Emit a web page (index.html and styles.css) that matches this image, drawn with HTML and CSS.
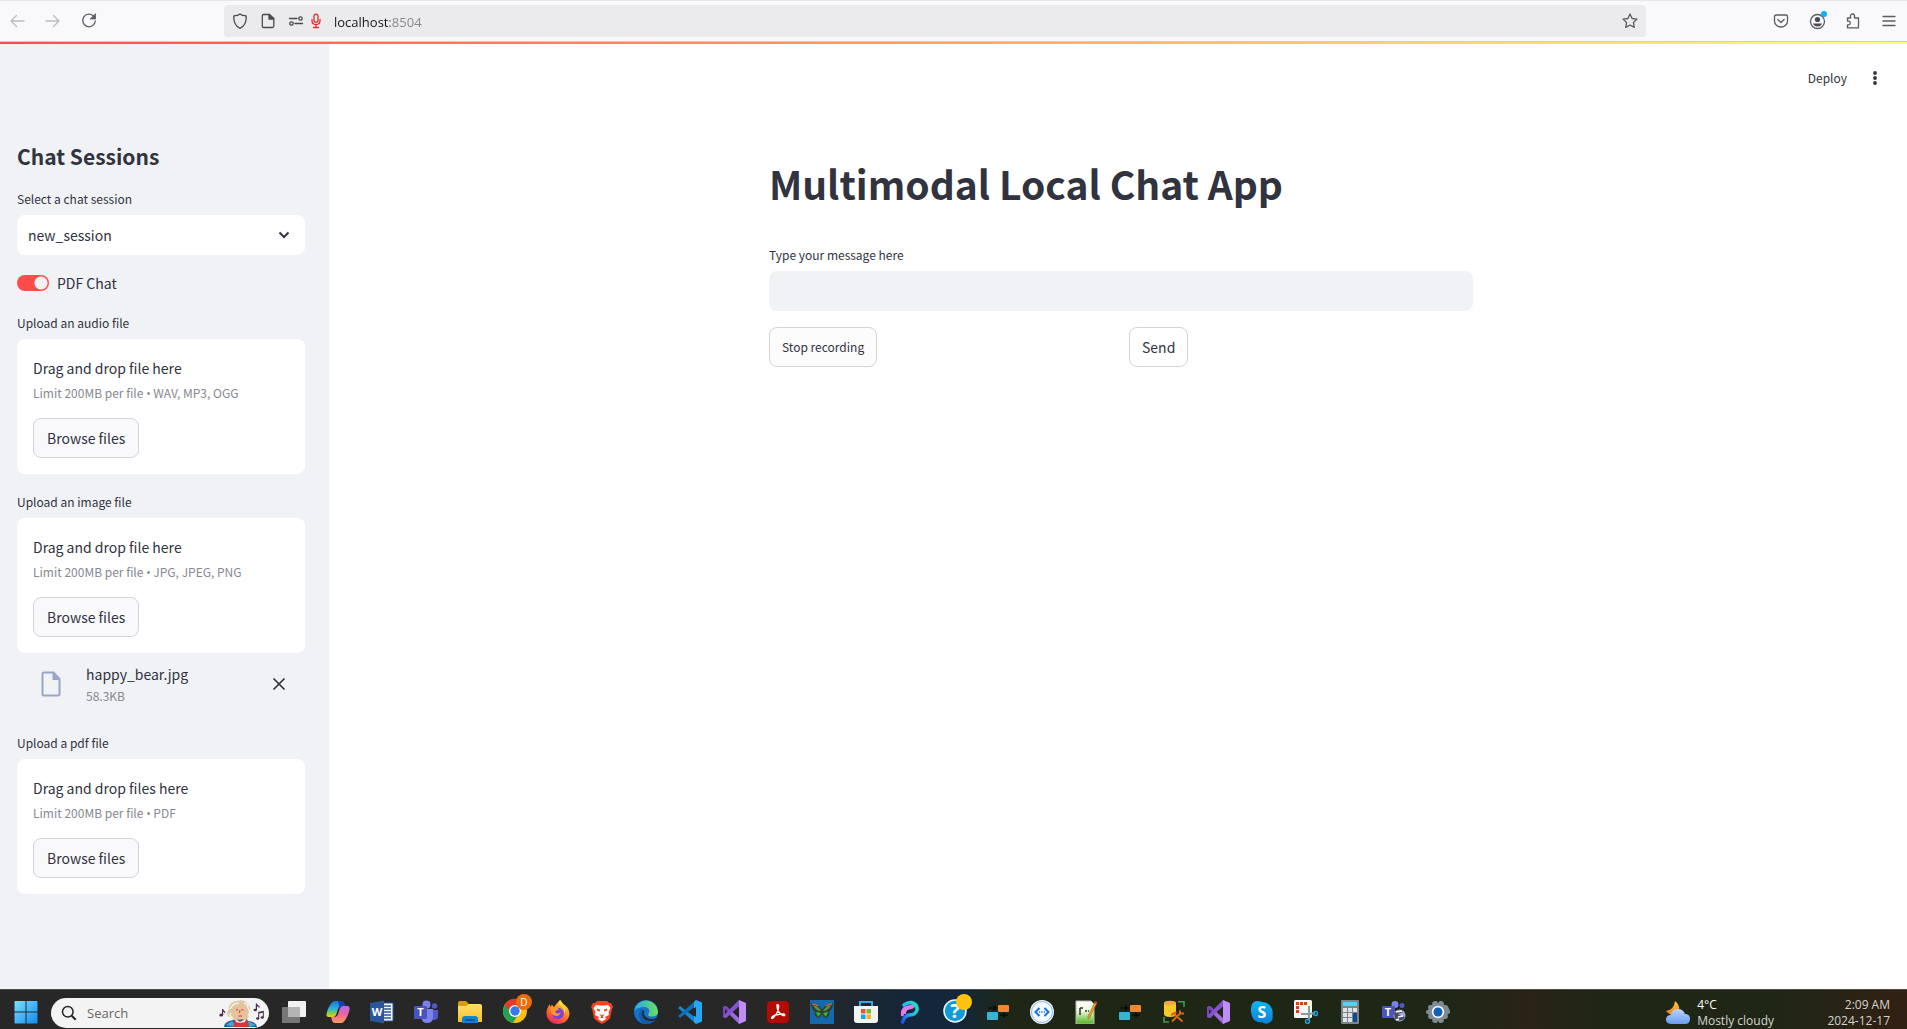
FILE: index.html
```html
<!DOCTYPE html>
<html lang="en">
<head>
<meta charset="utf-8">
<meta name="viewport" content="width=device-width, initial-scale=1">
<title>Multimodal Local Chat App</title>
<link rel="stylesheet" href="styles.css">
</head>
<body>
<svg class="defs" aria-hidden="true">
  <defs>
    <linearGradient id="g-win" x1="0" y1="0" x2="1" y2="1"><stop offset="0" stop-color="#7be0ff"/><stop offset="1" stop-color="#0f8bf0"/></linearGradient>
    <linearGradient id="g-cop1" x1="0" y1="0" x2="0" y2="1"><stop offset="0" stop-color="#1474e0"/><stop offset=".5" stop-color="#2bb5d8"/><stop offset=".75" stop-color="#7ccf4a"/><stop offset="1" stop-color="#f6c915"/></linearGradient>
    <linearGradient id="g-cop2" x1="0" y1="0" x2="0" y2="1"><stop offset="0" stop-color="#b26bf0"/><stop offset=".5" stop-color="#f0649a"/><stop offset="1" stop-color="#ff9a5c"/></linearGradient>
    <linearGradient id="g-folder" x1="0" y1="0" x2="0" y2="1"><stop offset="0" stop-color="#ffdf6b"/><stop offset="1" stop-color="#fbc02a"/></linearGradient>
    <linearGradient id="g-ff" x1=".8" y1="0" x2=".3" y2="1"><stop offset="0" stop-color="#ffe94a"/><stop offset=".45" stop-color="#ff8a1f"/><stop offset="1" stop-color="#f0225f"/></linearGradient>
    <linearGradient id="g-edge" x1="0" y1="0" x2="1" y2="0"><stop offset="0" stop-color="#2aa9e8"/><stop offset="1" stop-color="#6be05a"/></linearGradient>
    <linearGradient id="g-p" x1="0" y1="1" x2="1" y2="0"><stop offset="0" stop-color="#2350e8"/><stop offset=".5" stop-color="#22b8f0"/><stop offset="1" stop-color="#19e6b0"/></linearGradient>
    <linearGradient id="g-p2" x1="0" y1="0" x2="1" y2="1"><stop offset="0" stop-color="#ff9ae0"/><stop offset="1" stop-color="#c05cf0"/></linearGradient>
    <linearGradient id="g-note" x1="0" y1="0" x2="0" y2="1"><stop offset="0" stop-color="#fff"/><stop offset=".45" stop-color="#eaf6d8"/><stop offset="1" stop-color="#4bb51a"/></linearGradient>
    <linearGradient id="g-skype" x1="0" y1="0" x2="0" y2="1"><stop offset="0" stop-color="#12b4ee"/><stop offset="1" stop-color="#0a82dc"/></linearGradient>
    <linearGradient id="g-cloud" x1="0" y1="0" x2="0" y2="1"><stop offset="0" stop-color="#b9d6ff"/><stop offset="1" stop-color="#6a9cf2"/></linearGradient>
    <linearGradient id="g-moon" x1="0" y1="0" x2="0" y2="1"><stop offset="0" stop-color="#ffc83a"/><stop offset="1" stop-color="#f07f22"/></linearGradient>
    <symbol id="i-vs" viewBox="0 0 24 24"><path d="M1 7l3-1 13 12v6L2 9z" fill="#9b6bd8"/><path d="M1 7l3-1 3 2.500v7L4 18l-3-1z" fill="#7a45bd"/><path d="M3 9v6l3-3z" fill="#23231f"/><path d="M17 0L4 13l-3 4 3 1L17 6.500z" fill="#8452cf"/><path d="M17 0l7 3v18l-7 3z" fill="#c08cf5"/><path d="M17 7v10l-6-5z" fill="#23231f"/></symbol>
    <symbol id="i-flow" viewBox="0 0 24 24"><path d="M2 8h9M14 15h8" stroke="#0c0c0c" stroke-width="1.600"/><path d="M7 5l4 3-4 3zM17 12l4 3-4 3z" fill="#0c0c0c"/><rect x="12" y="5" width="11" height="7" rx="1" fill="#f5862b"/><rect x="1" y="12" width="11" height="8" rx="1" fill="#39b3cf"/></symbol>
  </defs>
</svg>

<header class="browser">
  <nav class="browser-nav" aria-label="Browser">
    <button class="tool" aria-label="Back" disabled><svg width="16" height="16" viewBox="0 0 16 16" class="line faded"><path d="M15 8H2M7.500 2.500L2 8l5.500 5.500"/></svg></button>
    <button class="tool" aria-label="Forward" disabled><svg width="16" height="16" viewBox="0 0 16 16" class="line faded"><path d="M1 8h13M8.500 2.500L14 8l-5.500 5.500"/></svg></button>
    <button class="tool" aria-label="Reload"><svg width="16" height="16" viewBox="0 0 16 16" class="line"><path d="M13 3.600A6.300 6.300 0 1 0 14.300 8"/><path d="M14.500 1v5h-5z" fill="#5b5b66" stroke-width=".8"/></svg></button>
  </nav>
  <div class="address">
    <svg width="16" height="16" viewBox="0 0 16 16" class="line dark"><path d="M8 .9C6.500 2.200 4 2.700 1.800 2.900 1.500 8 3 13 8 15.300 13 13 14.500 8 14.200 2.900 12 2.700 9.500 2.200 8 .9z"/></svg>
    <svg width="16" height="16" viewBox="0 0 16 16" class="line dark page-icon"><path d="M3.500 1.500H9.500L13.800 5.500V13q0 1.500-1.500 1.500H3.500Q2.300 14.500 2.300 13V3Q2.300 1.500 3.500 1.500z"/><path d="M9 1.500v4.500h4.800z" fill="#4a4a52"/></svg>
    <svg width="16" height="16" viewBox="0 0 16 16" class="line dark perm-icon"><path d="M1.500 5.500h7.500M7 10.500h7.500"/><circle cx="12.500" cy="5.500" r="1.700"/><circle cx="3.500" cy="10.500" r="1.700"/></svg>
    <svg width="12" height="16" viewBox="0 0 12 16" class="line red"><rect x="4" y="1.200" width="4" height="8" rx="2"/><path d="M2 6.500v1q0 4 4 4t4-4v-1M6 11.500v3M3.500 14.500h5"/></svg>
    <input class="url" type="text" aria-label="Address" value="localhost:8504">
    <button class="tool star" aria-label="Bookmark"><svg width="16" height="16" viewBox="0 0 16 16" class="line"><path d="M8 1l2.100 4.500 4.900.600-3.600 3.400.9 4.900L8 12l-4.300 2.400.9-4.900L1 6.100l4.900-.6z"/></svg></button>
  </div>
  <div class="browser-nav end">
    <button class="tool" aria-label="Save to Pocket"><svg width="16" height="16" viewBox="0 0 16 16" class="line"><path d="M3 2h10q1.500 0 1.500 1.500V8a6.500 6 0 0 1-13 0V3.500Q1.500 2 3 2zM4.800 6.500L8 9.500l3.200-3"/></svg></button>
    <button class="tool" aria-label="Account"><svg width="20" height="20" viewBox="0 0 20 20" class="line"><circle cx="10.500" cy="10.500" r="7"/><circle cx="10.500" cy="8.500" r="2.600" fill="#4a4a55" stroke="none"/><path d="M6 12.500h9q-1 3-4.500 3T6 12.500z" fill="#4a4a55" stroke="none"/><circle cx="17" cy="3" r="3" fill="#0ab0ff" stroke="none"/></svg></button>
    <button class="tool" aria-label="Extensions"><svg width="16" height="16" viewBox="0 0 16 16" class="line"><path d="M2.500 5h3V3a2 2 0 0 1 4 0v2h4v9.800h-11v-3h1a1.800 1.800 0 0 0 0-3.600h-1z"/></svg></button>
    <button class="tool" aria-label="Menu"><svg width="14" height="14" viewBox="0 0 14 14" class="line"><path d="M1 2.500h12M1 7h12M1 11.500h12"/></svg></button>
  </div>
</header>
<div class="progress-stripe"></div>

<div class="app">
  <aside class="sidebar">
    <h2>Chat Sessions</h2>
    <label class="label" for="session">Select a chat session</label>
    <div class="select-wrap">
      <select id="session"><option>new_session</option></select>
      <svg class="chevron" width="12" height="8" viewBox="0 0 12 8"><path d="M1.500 1.500L6 6l4.500-4.500" fill="none" stroke="#31333f" stroke-width="2"/></svg>
    </div>
    <label class="toggle"><input type="checkbox" role="switch" checked>PDF Chat</label>

    <section class="uploader">
      <h3 class="label">Upload an audio file</h3>
      <div class="dropzone">
        <p>Drag and drop file here</p>
        <small>Limit 200MB per file <span class="dot">•</span> WAV, MP3, OGG</small>
        <button class="btn">Browse files</button>
      </div>
    </section>

    <section class="uploader">
      <h3 class="label">Upload an image file</h3>
      <div class="dropzone">
        <p>Drag and drop file here</p>
        <small>Limit 200MB per file <span class="dot">•</span> JPG, JPEG, PNG</small>
        <button class="btn">Browse files</button>
      </div>
      <div class="file">
        <svg width="20" height="26" viewBox="0 0 20 26"><path d="M3 1.500h9.500L18.500 8v15q0 1.500-1.500 1.500H3q-1.500 0-1.500-1.500V3Q1.500 1.500 3 1.500z" fill="none" stroke="#98a5ca" stroke-width="2"/><path d="M11.500 1.500V9h7z" fill="#98a5ca"/></svg>
        <div class="file-info"><span>happy_bear.jpg</span><small>58.3KB</small></div>
        <button class="remove" aria-label="Remove file"><svg width="14" height="14" viewBox="0 0 14 14"><path d="M1.500 1.500l11 11M12.500 1.500l-11 11" stroke="#31333f" stroke-width="1.700"/></svg></button>
      </div>
    </section>

    <section class="uploader last">
      <h3 class="label">Upload a pdf file</h3>
      <div class="dropzone">
        <p>Drag and drop files here</p>
        <small>Limit 200MB per file <span class="dot">•</span> PDF</small>
        <button class="btn">Browse files</button>
      </div>
    </section>
  </aside>

  <main class="main">
    <div class="app-header">
      <button class="deploy">Deploy</button>
      <button class="kebab" aria-label="Main menu"><svg width="4" height="14" viewBox="0 0 4 14" fill="#31333f"><circle cx="2" cy="2" r="1.900"/><circle cx="2" cy="7" r="1.900"/><circle cx="2" cy="12" r="1.900"/></svg></button>
    </div>
    <div class="content">
      <h1>Multimodal Local Chat App</h1>
      <label class="label" for="message">Type your message here</label>
      <input class="message" id="message" type="text">
      <div class="actions">
        <div><button class="btn record">Stop recording</button></div>
        <div><button class="btn send">Send</button></div>
      </div>
    </div>
  </main>
</div>

<footer class="taskbar">
  <button class="task start" aria-label="Start"><svg width="24" height="24" viewBox="0 0 24 24" fill="url(#g-win)"><path d="M1 1h10.500v10.500H.5V1.500zM12.500 1H23l.5.500v10h-11zM.5 12.500h11v11H1l-.5-.5zM12.500 12.500h11V23l-.5.500H12.500z"/></svg></button>
  <label class="search">
    <svg width="16" height="16" viewBox="0 0 16 16"><circle cx="6.800" cy="6.800" r="5.300" fill="none" stroke="#222" stroke-width="1.500"/><path d="M10.700 10.700l4 4" stroke="#222" stroke-width="2"/></svg>
    <input type="search" placeholder="Search" aria-label="Search">
    <svg width="46" height="28" viewBox="0 0 46 28">
      <g fill="#4b2c4e"><ellipse cx="2.200" cy="16" rx="1.900" ry="1.500"/><path d="M3 10h1.200q.2 1.600 2 2.500.6 1-.4 2-.2-1.500-1.600-1.700V16H3z"/><ellipse cx="36.200" cy="11" rx="1.700" ry="1.300"/><path d="M36.800 4.500H38q.2 1.600 2.500 2.500.6 1-.4 2-.6-1.500-2.100-1.700V11h-1.200z"/><ellipse cx="38.700" cy="19.500" rx="1.600" ry="1.300"/><ellipse cx="43.200" cy="18.500" rx="1.600" ry="1.300"/><path d="M39.200 13l5.600-1.200v6.700h-1v-4.700l-3.600.8v5h-1z"/></g>
      <path d="M5 28q0-5 7-6.500l9-2 9 2.500q8 1.500 8 6z" fill="#27649f"/><path d="M7 26l6-4 4 6zM29 22l8 4-7 2z" fill="#4aa6d6"/>
      <path d="M16 20l5 2 7-2 2 8H14z" fill="#d23a35"/>
      <path d="M11 18C7 17 8 12 10 11 9 6 13 2 18 2c4-2 10 0 11 4 3 2 3 7 1 9 1 3-2 6-5 5l-10 1z" fill="#d9c8a6"/>
      <path d="M11 10q3-6 9-6M12 14q-3 3 2 5M29 9q3 4 0 8M25 4q4 1 4 5" fill="none" stroke="#fff1d5" stroke-width="1.400"/>
      <path d="M15 9q5 0 7-3 5 1 5 5t-2 7q-4 5-8 0-2-3-2-9z" fill="#f3bd98"/>
      <path d="M17 11l2-.5M22.500 10.500l2 .500M19.500 17h3.500M21 11l-.5 3" stroke="#8c5542" stroke-width="1"/>
      <path d="M16 20l5 3 6-3-1 3-5 1-4-1z" fill="#e8f2f6"/>
    </svg>
  </label>
  <div class="tasks">
    <button class="task" aria-label="Task view"><svg width="24" height="24" viewBox="0 0 24 24"><rect x="6" y="1" width="18" height="16" rx="1" fill="#f2f2f2"/><rect x="0" y="7" width="18" height="16" rx="1" fill="#777"/><path d="M6 7h12v10H6z" fill="#b4b4b4"/></svg></button>
    <button class="task" aria-label="Copilot"><svg width="24" height="24" viewBox="0 0 24 24"><path d="M6 2.500Q7 1 9 1h6q2 0 2.800 2L19 6h-4q-2 0-3 3l-2 6q-1 2-3 2H2.500Q0 17 .5 14 2 7 6 2.500z" fill="url(#g-cop1)"/><path d="M18 21.500Q17 23 15 23H9q-2 0-2.800-2L5 17h4q2 0 3-3l2-6q1-2 3-2h4.500Q24 6 23.500 10 22 17 18 21.500z" fill="url(#g-cop2)"/><path d="M12 1h4q2 0 3 5h-4l-1 2z" fill="#173fae"/></svg></button>
    <button class="task" aria-label="Word"><svg width="24" height="24" viewBox="0 0 24 24"><path d="M12 3h11v18H12z" fill="#f4f7fb" stroke="#2b579a"/><path d="M13 6h8M13 9h8M13 12h8M13 15h8M13 18h8" stroke="#2b579a" stroke-width="1.300"/><path d="M0 3L14 .5v23L0 21z" fill="#2b579a"/><text x="7" y="16" class="glyph">W</text></svg></button>
    <button class="task" aria-label="Teams"><svg width="24" height="24" viewBox="0 0 24 24"><circle cx="12.500" cy="4.500" r="4" fill="#7b83eb"/><circle cx="20.500" cy="6" r="2.700" fill="#5059c9"/><path d="M17 10h7v6q0 4-4 4h-3z" fill="#5059c9"/><path d="M8 9h11v8q0 6-6 6-5 0-5.500-5z" fill="#7b83eb"/><rect x="0" y="6" width="13" height="13" rx="1" fill="#4b53bc"/><text x="6.500" y="16" class="glyph">T</text></svg></button>
    <button class="task" aria-label="File Explorer"><svg width="24" height="24" viewBox="0 0 24 24"><path d="M0 3q0-2 2-2h6l3 3h10v5H0z" fill="#d89a12"/><path d="M0 6h8l3-2h11q2 0 2 2v16H0z" fill="url(#g-folder)"/><path d="M4 23v-4q0-3 3-3h10q3 0 3 3v4z" fill="#1382d4"/><path d="M7 19h10v2H7z" fill="#075b9d"/></svg></button>
    <button class="task" aria-label="Chrome"><svg width="30" height="30" viewBox="0 0 30 30"><circle cx="13" cy="17" r="12" fill="#fbc116"/><path d="M13 17L2.600 11A12 12 0 0 0 11 28.800l5-8z" fill="#21a355"/><path d="M2.600 11A12 12 0 0 1 24.500 13H13l-4 5z" fill="#e33b2e"/><circle cx="13" cy="17" r="6" fill="#fff"/><circle cx="13" cy="17" r="4.700" fill="#367bea"/><circle cx="22" cy="8" r="8" fill="#ef6c0a"/><text x="22" y="12" class="glyph badge">D</text></svg></button>
    <button class="task" aria-label="Firefox"><svg width="24" height="24" viewBox="0 0 24 24"><path d="M14 0q2 2 3 4 6 3 6.500 9.500C23.500 19 19 24 12 24S.5 19 .5 13Q.5 8 4 4v3l2-2 2 2q3-4 6-7z" fill="url(#g-ff)"/><circle cx="12" cy="13.500" r="5.800" fill="#7a3fe0"/><path d="M6 5l1 3 4-.5 2 2-2.500 1L9 12q3 3 6 0-1 4-5 4-5-1-5-5-2-2 1-6z" fill="#ff9b22"/><path d="M14 0q-2 4 1 6 4 3 3 8 3-5 0-9z" fill="#ffda38"/></svg></button>
    <button class="task" aria-label="Brave"><svg width="24" height="24" viewBox="0 0 24 24"><path d="M7 1h10l2 2h2l2 4-1 2-2 9q-1 2-8 6-7-4-8-6L2 9 1 7l2-4h2z" fill="#f5441f"/><path d="M6 5l4 .5h4L18 5l2.500 3-2 4 .5 3-4 2 1 2-4 2.500L8 19l1-2-4-2 .5-3-2-4z" fill="#fff"/><path d="M7 8.500l3 1v2l-3-1zM17 8.500l-3 1v2l3-1zM9 14l3 1 3-1-2 2v1l1 1h-4l1-1v-1z" fill="#f5441f"/></svg></button>
    <button class="task" aria-label="Edge"><svg width="24" height="24" viewBox="0 0 24 24"><circle cx="12" cy="12" r="12" fill="#1473ca"/><path d="M.2 10.500A12 12 0 0 1 24 11.500q0 5-6 5-4 0-4-2l1.500-3Q15 7 10 7 4 7 .2 10.500z" fill="url(#g-edge)"/><path d="M9 10q-4 6 2 11 5 2 10-1l1.500-2q-5 2-9 0-5-3-3-7z" fill="#262a2d"/><path d="M7 9q-5 7 2 14.500 8 1.500 12-3-7 2-11-2-3-4-1-8z" fill="#125ba8"/></svg></button>
    <button class="task" aria-label="Visual Studio Code"><svg width="24" height="24" viewBox="0 0 24 24"><path d="M0 8l2-2 16 12v6z" fill="#1687cf"/><path d="M0 16l2 2L18 6V0z" fill="#0a6fb8"/><path d="M18 0l6 2.500v19L18 24l-2-2V2z" fill="#27a6f2"/><path d="M18 7v10l-7-5z" fill="#262626"/></svg></button>
    <button class="task" aria-label="Visual Studio"><svg width="24" height="24"><use href="#i-vs"/></svg></button>
    <button class="task" aria-label="Acrobat"><svg width="22" height="22" viewBox="0 0 22 22"><rect width="22" height="22" rx="4" fill="#b30b00"/><path d="M10 4q2-1 1.500 3Q11 12 6 17q-2 1-1-1 3-3 12-3 2 2-1 1.500Q10 12 10 4z" fill="none" stroke="#fff" stroke-width="1.400"/></svg></button>
    <button class="task" aria-label="Butterfly"><svg width="24" height="24" viewBox="0 0 24 24"><path d="M0 0h24v24H0z" fill="#1269ac"/><path d="M1 3q6 0 10.500 6h1Q17 3 23 3q0 6-4 9 1 5-3 6-3-1-4-4-1 3-4 4-4-1-3-6-4-3-4-9z" fill="#3b3a2c"/><path d="M3 5q5 1 8 6-5 0-8-6zM21 5q-5 1-8 6 5 0 8-6z" fill="#4f9a4a"/><path d="M6 12l5 1-3 4zM18 12l-5 1 3 4z" fill="#23c23a"/><path d="M2 4q4 0 6 2M22 4q-4 0-6 2" stroke="#b56557" stroke-width="1.400" fill="none"/></svg></button>
    <button class="task" aria-label="Microsoft Store"><svg width="24" height="24" viewBox="0 0 24 24"><path d="M6 7V2h12v5" fill="none" stroke="#35a8e8" stroke-width="2"/><path d="M0 6h24v14q0 3-3 3H3q-3 0-3-3z" fill="#f3f3f3"/><path d="M7 9h4.500v4.500H7z" fill="#ef5430"/><path d="M12.500 9H17v4.500h-4.500z" fill="#7db82a"/><path d="M7 14.500h4.500V19H7z" fill="#19a2e8"/><path d="M12.500 14.500H17V19h-4.500z" fill="#fab51e"/></svg></button>
    <button class="task" aria-label="Designer"><svg width="24" height="24" viewBox="0 0 24 24"><path d="M6 14Q6 8 11 7.500 16 7 16 4" fill="none" stroke="url(#g-p2)" stroke-width="4"/><path d="M6 5Q9 2.500 13.500 2.500 19.500 4 19 10 17 15.500 11 15 6 16 4.500 22" fill="none" stroke="url(#g-p)" stroke-width="3.600" stroke-linecap="round"/><path d="M4.500 16Q3 9 9 7.500l5-1" fill="none" stroke="#e07bee" stroke-width="3"/></svg></button>
    <button class="task" aria-label="Get Help"><svg width="30" height="30" viewBox="0 0 30 30"><circle cx="13" cy="17" r="11" fill="#0f9ad9" stroke="#e9f7fd" stroke-width="1.600"/><text x="13" y="24" class="glyph help">?</text><circle cx="22" cy="8" r="8" fill="#ffc20e"/></svg></button>
    <button class="task" aria-label="Transfer tool"><svg width="24" height="24"><use href="#i-flow"/></svg></button>
    <button class="task" aria-label="Code tool"><svg width="24" height="24" viewBox="0 0 24 24"><circle cx="12" cy="12" r="12" fill="#f3f8ff"/><circle cx="12" cy="12" r="10.500" fill="none" stroke="#88b9f0" stroke-width="1"/><path d="M9.500 8L5.500 12l4 4M14.500 8l4 4-4 4" fill="none" stroke="#1673d1" stroke-width="2"/><path d="M9 12h1.200M11.400 12h1.200M13.800 12H15" stroke="#1673d1" stroke-width="1.600"/></svg></button>
    <button class="task" aria-label="Notepad++"><svg width="24" height="24" viewBox="0 0 24 24"><path d="M2 1h15l3 3v20H2z" fill="url(#g-note)" stroke="#b4baae"/><path d="M6 15V8M6 8h3M11 11h2M14 11h1" stroke="#333" stroke-width="1.500"/><path d="M21 2l2 1-7 14-2 2v-3z" fill="#e2a52c" stroke="#8c551b" stroke-width=".5"/><path d="M21 1l2.500 1-1 2-2.500-1z" fill="#c63c35"/></svg></button>
    <button class="task" aria-label="Transfer tool 2"><svg width="24" height="24"><use href="#i-flow"/></svg></button>
    <button class="task" aria-label="Database tool"><svg width="24" height="24" viewBox="0 0 24 24"><path d="M16 1.800h6v5M2 17v5h5" fill="none" stroke="#3aa04e" stroke-width="1.600"/><path d="M2 3v11q0 3 6 3t6-3V3z" fill="#f8c928"/><ellipse cx="8" cy="3" rx="6" ry="2.300" fill="#f3a64d"/><path d="M10 21.500l8.500-8.500M12 14l8.500 7.500M18 10.500v3h4M9.500 15.500q1-3 5-3" fill="none" stroke="#dc6a13" stroke-width="2"/></svg></button>
    <button class="task" aria-label="Visual Studio 2022"><svg width="24" height="24"><use href="#i-vs"/></svg></button>
    <button class="task" aria-label="Skype"><svg width="24" height="24" viewBox="0 0 24 24"><path d="M6 1q4 0 6 1 7 0 10 7 1 3 .5 6 1 4-2 7-4 3-8 .5Q3 23 1.500 14 0 9 2 4q1-2 4-3z" fill="url(#g-skype)"/><text x="12" y="18" class="glyph skype">S</text></svg></button>
    <button class="task" aria-label="Snipping Tool"><svg width="24" height="24" viewBox="0 0 24 24"><rect width="18" height="18" rx="1.500" fill="#f6f6f6"/><path d="M3.500 13V3.500H14" fill="none" stroke="#dc3e11" stroke-width="3" stroke-dasharray="3 1"/><path d="M15 6v8H7M15 14l6-1M15 14v6" stroke="#94989c" stroke-width="2" fill="none"/><circle cx="21.500" cy="13.500" r="2" fill="none" stroke="#1fa2e0" stroke-width="1.500"/><circle cx="13.500" cy="21.500" r="2" fill="none" stroke="#1fa2e0" stroke-width="1.500"/></svg></button>
    <button class="task" aria-label="Calculator"><svg width="24" height="24" viewBox="0 0 24 24"><rect x="3" width="18" height="24" rx="1" fill="#7c858c"/><path d="M5 2h14v4H5z" fill="#4fd5f4"/><path d="M5 8h4v4H5zM10 8h4v4h-4zM15 8h4v4h-4zM5 13h4v4H5zM10 13h4v4h-4zM5 18h4v4H5zM10 18h4v4h-4z" fill="#dfe3e6"/><path d="M15 13h4v9h-4z" fill="#0a4c91"/></svg></button>
    <button class="task" aria-label="Teams classic"><svg width="24" height="24" viewBox="0 0 24 24"><circle cx="13" cy="4.500" r="3.500" fill="#7b83eb"/><circle cx="20" cy="5.500" r="2.500" fill="#5059c9"/><rect y="6" width="13" height="12" rx="1" fill="#4b53bc"/><text x="6" y="16" class="glyph">T</text><circle cx="17.500" cy="15.500" r="6" fill="#a6a7cd"/><path d="M12 13q4-4 9-1l-5 2 3 2 4 1q-1 3-5 3.500L13 19z" fill="#484b65"/><path d="M14 12l6-1M16 17l5-1M14 20l3-1" stroke="#f4f4fa" stroke-width="1.500"/></svg></button>
    <button class="task" aria-label="Settings"><svg width="24" height="24" viewBox="0 0 24 24"><path d="M8.500 1h2l1.500 2 1.500-2h2l2 1 .5 3 2.500 0 1.500 1.500L24 11v2l-2.500 1.500L22 17l-1.500 2H18l-.5 3-2 1h-2L12 21l-1.500 2h-2l-2-1L6 19H3.500L2 17l.5-2.500L0 13v-2l2.500-1.500L2 6.500 3.500 5H6l.5-3z" fill="#808a92"/><circle cx="12" cy="12" r="6.200" fill="#f4f7fa"/><circle cx="12" cy="12" r="4.500" fill="#1261b4"/></svg></button>
  </div>
  <button class="weather">
    <svg width="24" height="24" viewBox="0 0 24 24"><path d="M9 0q5 4 4 9l-3 5Q4 15 0 10q8-1 9-10z" fill="url(#g-moon)"/><path d="M5 23q-5-.5-5-4.500T4.500 14Q6 8 12 8q5 0 7 5 5 0 5 5t-5 5z" fill="url(#g-cloud)"/></svg>
    <span class="stack"><span class="temp">4°C</span><span>Mostly cloudy</span></span>
  </button>
  <button class="clock stack"><span>2:09 AM</span><span>2024-12-17</span></button>
</footer>
</body>
</html>
```

FILE: styles.css
```css
:root {
  --text: #31333f;
  --muted: #878891;
  --panel: #f0f2f6;
  --line: #d3d4d9;
  --app-font: "Source Sans Pro", "Noto Sans CJK SC", sans-serif;
  --shell-font: "Segoe UI", "Open Sans", sans-serif;
}

* { box-sizing: border-box; }

body {
  margin: 0;
  min-height: 100vh;
  display: flex;
  flex-direction: column;
  color: var(--text);
  font: 14px/24px var(--app-font);
}

button, input, select { font: inherit; color: inherit; }
button { padding: 0; border: 0; background: none; }
h1, h2, h3, p { margin: 0; }
svg { display: block; flex: none; }
.defs { position: absolute; width: 0; height: 0; }

/* Browser toolbar */
.browser {
  display: flex;
  align-items: center;
  gap: 119px;
  height: 42px;
  padding: 0 2px 0 1px;
  background: #f9f9fb;
  border-top: 1px solid #e6e6ea;
  border-bottom: 1px solid #cccdd2;
  font-family: var(--shell-font);
}
.browser-nav { display: flex; gap: 4px; }
.tool {
  display: grid;
  place-items: center;
  width: 32px;
  height: 32px;
}
.line { fill: none; stroke: #5b5b66; stroke-width: 1.3; stroke-linecap: round; stroke-linejoin: round; }
.faded { stroke: #bbbbc1; }
.dark { stroke: #4a4a52; }
.red { stroke: #e22b26; }
.address {
  flex: 1;
  display: flex;
  align-items: center;
  height: 32px;
  padding-left: 8px;
  background: #ebebed;
  border-radius: 4px;
}
.page-icon, .perm-icon { margin-left: 12px; }
.red { margin-left: 6px; }
.url {
  flex: 1;
  min-width: 0;
  margin-left: 12px;
  padding: 2px 0 0;
  border: 0;
  font-size: 13px;
  color: transparent;
  background: linear-gradient(90deg, #15141a 56px, #858589 56px);
  background-clip: text;
}

.progress-stripe { height: 2px; background: linear-gradient(90deg, #ff4b4b, #fffd80); }

/* App */
.app { flex: 1; display: flex; }
.sidebar {
  flex: none;
  width: 329px;
  padding: 96px 24px 24px 17px;
  background: var(--panel);
}
h2 { font-size: 21px; line-height: 32px; font-weight: 700; }
.label {
  display: block;
  margin-bottom: 6px;
  font-size: 12px;
  line-height: 20px;
  font-weight: 400;
}
h2 + .label { margin-top: 17px; }
.select-wrap { position: relative; }
select {
  appearance: none;
  display: block;
  width: 100%;
  height: 40px;
  padding: 0 11px;
  border: 0;
  border-radius: 8px;
  background: #fff;
}
.chevron { position: absolute; right: 15px; top: 16px; pointer-events: none; }
.toggle {
  display: flex;
  align-items: center;
  gap: 8px;
  height: 24px;
  margin: 16px 0 18px;
}
.toggle input {
  appearance: none;
  width: 32px;
  height: 16px;
  margin: 0;
  border-radius: 8px;
  background: radial-gradient(circle at 24px 8px, var(--panel) 6px, #ff4b4b 7px);
}
.uploader { margin-bottom: 18px; }
.dropzone {
  display: flex;
  flex-direction: column;
  align-items: flex-start;
  padding: 16px;
  border-radius: 8px;
  background: #fff;
}
.dropzone p { margin-bottom: 2px; padding-top: 1px; }
small { color: var(--muted); font-size: 12px; line-height: 22px; }
.dot { font-family: "Open Sans", sans-serif; line-height: 1; }
.btn {
  height: 40px;
  padding: 0 13px;
  border: 1px solid var(--line);
  border-radius: 8px;
  background: #f9f9fb;
}
.dropzone .btn { margin-top: 14px; }
.file {
  display: flex;
  align-items: center;
  height: 62px;
  padding: 0 19px 0 24px;
}
.file-info { flex: 1; display: flex; flex-direction: column; margin-left: 25px; padding-top: 2px; }
.file-info span { line-height: 22px; }
.remove { display: grid; place-items: center; }

.main { flex: 1; padding-left: 6px; }
.app-header {
  display: flex;
  justify-content: flex-end;
  align-items: center;
  gap: 26px;
  height: 68px;
  padding-right: 30px;
}
.deploy { font-size: 12px; }
.content { max-width: 704px; margin: 0 auto; padding-top: 43px; }
h1 { font-size: 39px; line-height: 56px; font-weight: 700; }
h1 + .label { margin-top: 34px; }
.message {
  display: block;
  width: 100%;
  height: 40px;
  padding: 0 12px;
  border: 0;
  border-radius: 8px;
  background: var(--panel);
}
.actions { display: grid; grid-template-columns: 1fr 1fr; gap: 16px; margin-top: 16px; }
.record { font-size: 12px; padding: 0 12px; background: #fcfcfd; }
.send { padding: 0 12px; background: #fff; }

/* Taskbar */
.taskbar {
  display: flex;
  align-items: flex-end;
  height: 40px;
  padding: 0 17px 1px 4px;
  border-top: 1px solid #4b4b4b;
  color: #d4d3cf;
  font: 12px/16px var(--shell-font);
  background: linear-gradient(90deg, #272727 0 42%, #13263a 48% 50%, #1e2716 53% 76%, #292316 80%, #1f2615 84% 93%, #322014);
}
.task { display: grid; place-items: center; width: 44px; height: 32px; }
.search {
  display: flex;
  align-items: center;
  width: 218px;
  height: 30px;
  margin: 0 3px;
  padding: 0 4px 0 10px;
  border-radius: 15px;
  background: #f3f3f3;
}
.search input {
  flex: 1;
  min-width: 0;
  padding: 0 10px;
  border: 0;
  background: none;
  font-size: 13px;
}
.search input::placeholder { color: #666; opacity: 1; }
.tasks { display: flex; flex: 1; }
.tasks svg[width="30"] { margin: -6px -3px 0 3px; }
.stack { display: flex; flex-direction: column; }
.weather { display: flex; align-items: center; gap: 7px; text-align: left; }
.weather, .clock { margin-bottom: -1px; }
.temp { color: #fff; }
.clock { width: 116px; text-align: right; }
.glyph { font: 700 11px "Open Sans", sans-serif; fill: #fff; text-anchor: middle; }
.badge { font-size: 10px; font-weight: 400; }
.help { font-size: 20px; }
.skype { font-size: 16px; }
```
